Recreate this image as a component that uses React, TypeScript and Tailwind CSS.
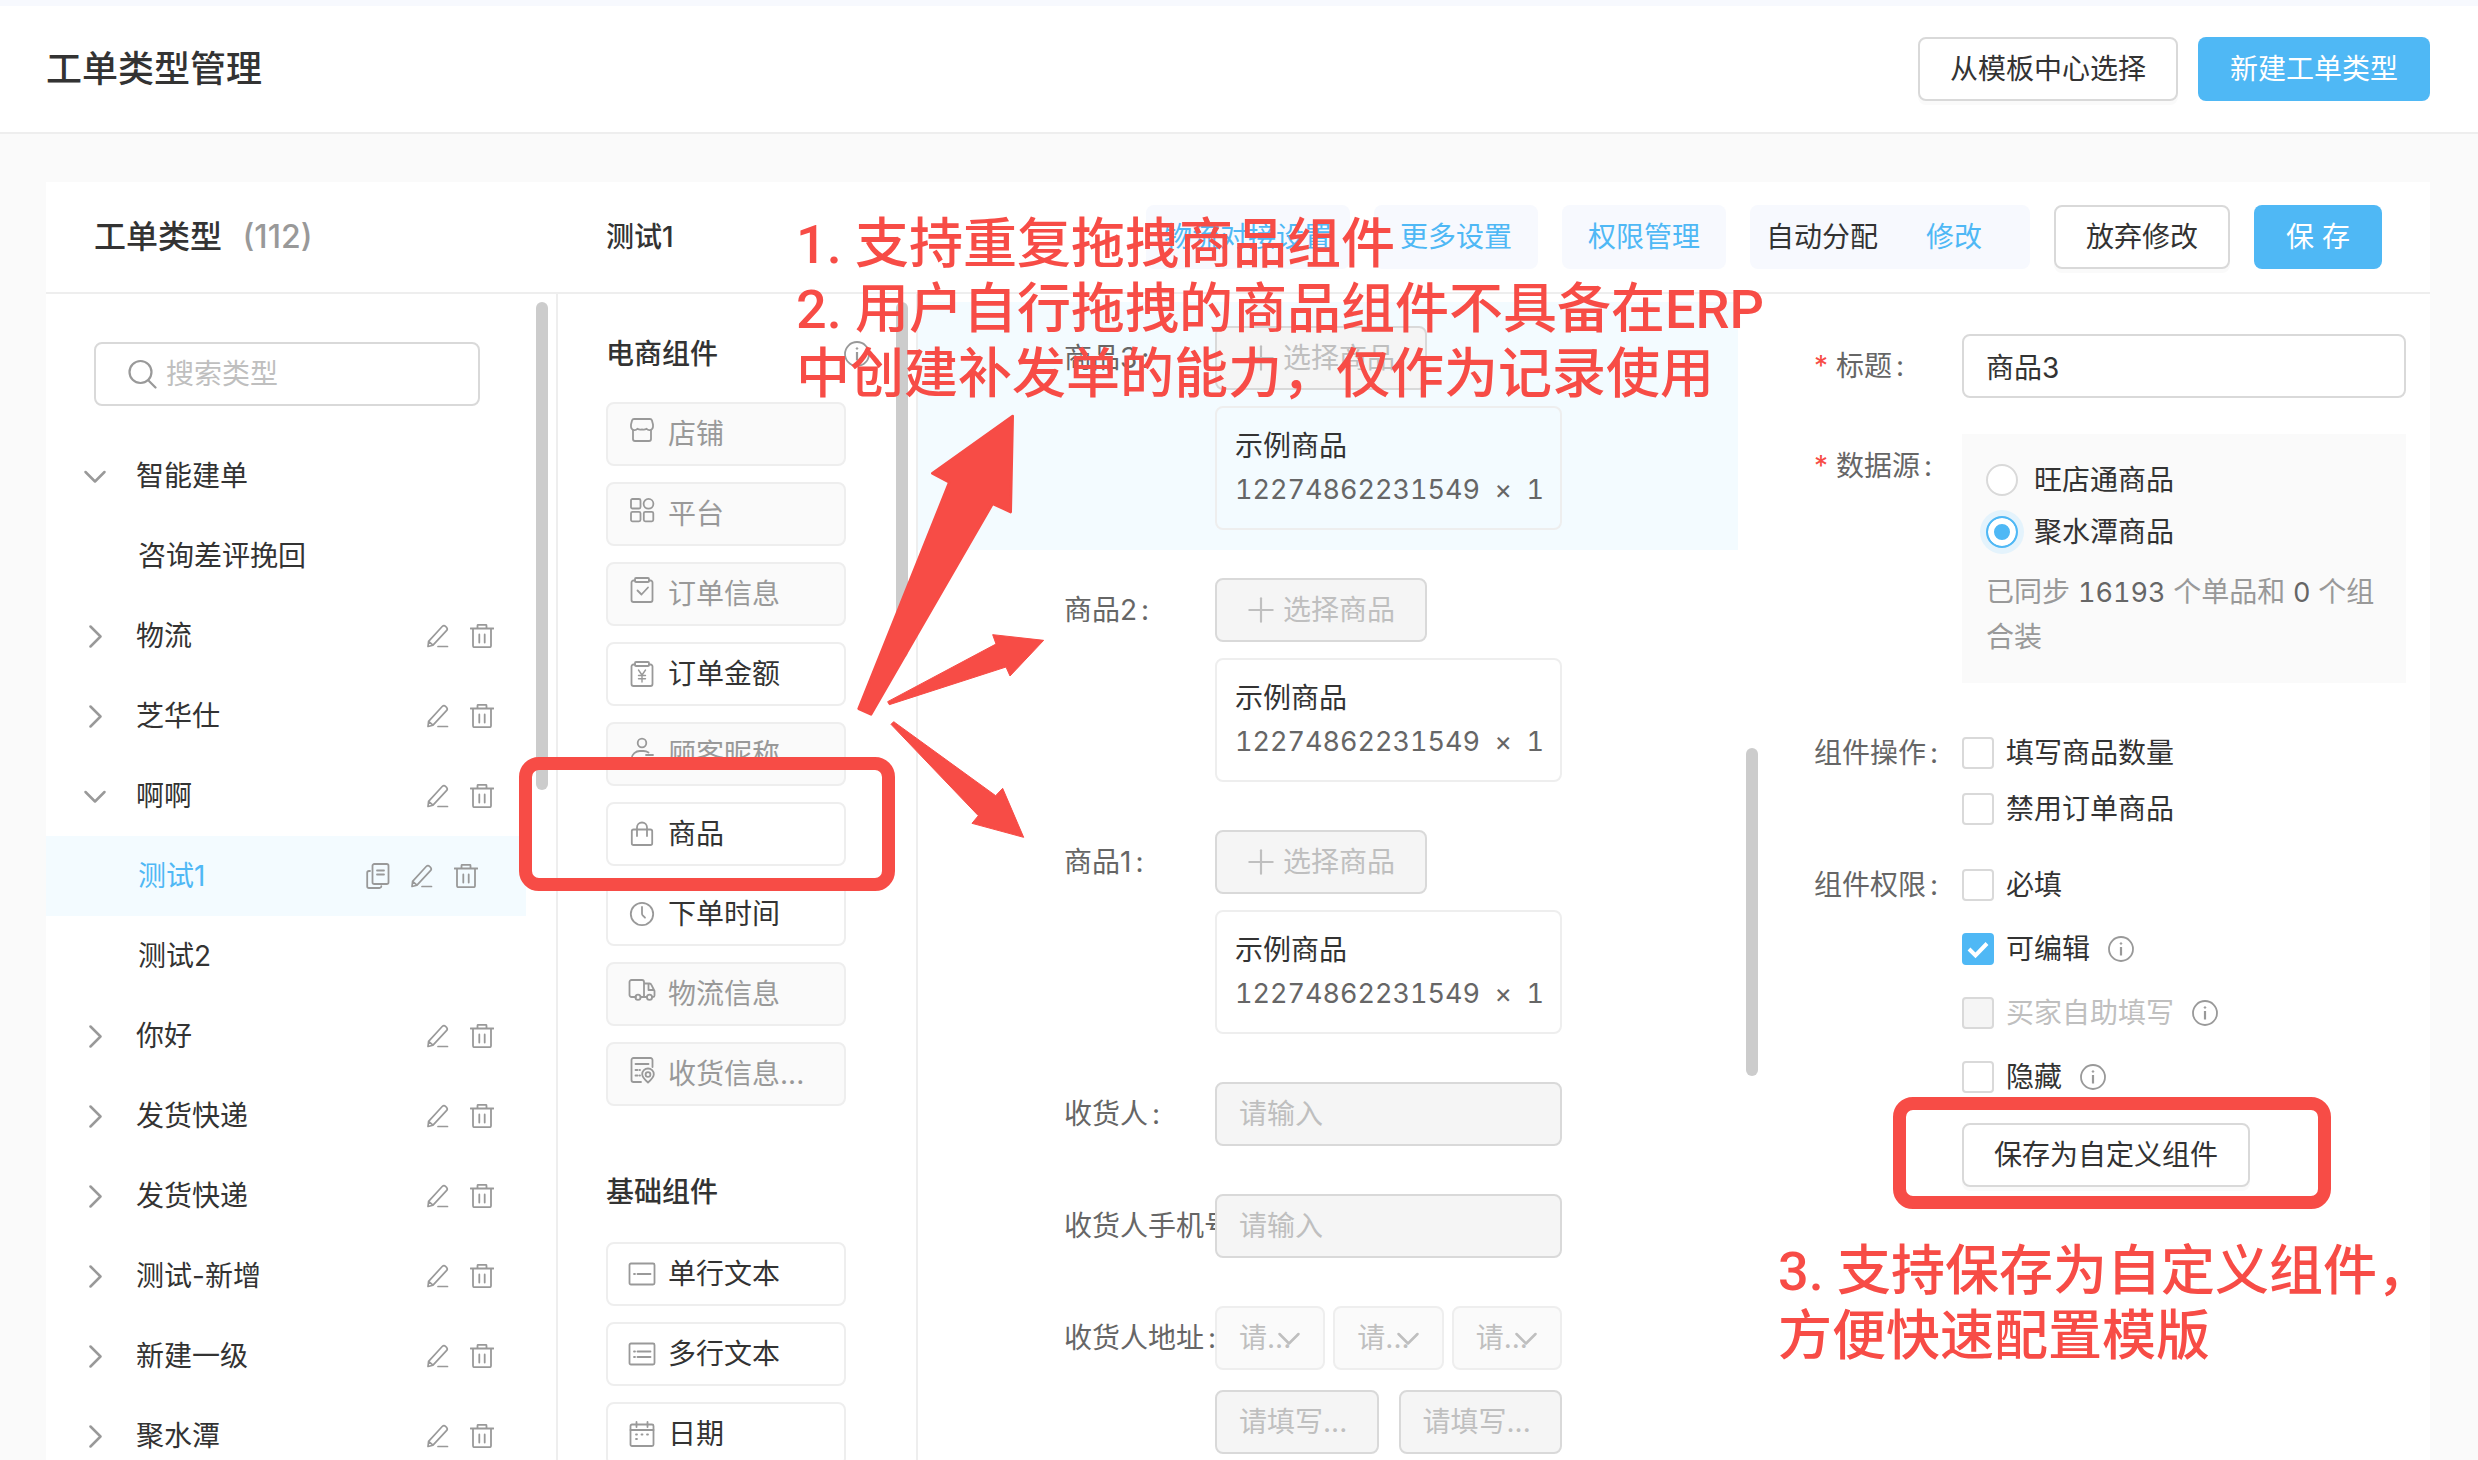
import { useState, type ReactNode } from 'react'
import { Plus } from 'lucide-react'

const icons: Record<string, ReactNode> = {
  shop: (
    <>
      <path d="M4 1h16c1 0 1.600.500 1.900 1.300L23 6.500v2.300a3.600 3.600 0 0 1-6.400 2 5.600 5.600 0 0 1-4.600.600 5.600 5.600 0 0 1-4.600-.600A3.600 3.600 0 0 1 1 8.800V6.500l1.100-4.200C2.400 1.500 3 1 4 1z" />
      <path d="M3 12v9c0 1.100.900 2 2 2h14c1.100 0 2-.900 2-2v-9" />
    </>
  ),
  platform: (
    <>
      <rect x="1" y="1" width="9.500" height="9.500" rx="1.500" />
      <circle cx="18.500" cy="5.800" r="4.900" />
      <rect x="1" y="13.800" width="9.500" height="9.500" rx="1.500" />
      <rect x="13.800" y="13.800" width="9.500" height="9.500" rx="1.500" />
    </>
  ),
  orderInfo: (
    <>
      <path d="M5 2.500H3.500A2 2 0 0 0 1.500 4.500V22a2 2 0 0 0 2 2h17a2 2 0 0 0 2-2V4.500a2 2 0 0 0-2-2H19" />
      <rect x="5" y="0" width="14" height="4" rx="1" />
      <path d="M7.500 12.500l4 4 6.500-7" />
    </>
  ),
  orderAmount: (
    <>
      <path d="M5 2.500H3.500A2 2 0 0 0 1.500 4.500V22a2 2 0 0 0 2 2h17a2 2 0 0 0 2-2V4.500a2 2 0 0 0-2-2H19" />
      <rect x="5" y="0" width="14" height="4" rx="1" />
      <path d="M8.500 8l3.500 5 3.500-5M12 13v7M8.500 13.500h7M8.500 16.800h7" strokeWidth="1.400" />
    </>
  ),
  customer: (
    <>
      <circle cx="12" cy="5" r="4.300" />
      <path d="M1.500 22v-1.500A8.500 8.500 0 0 1 10 13h3.500c2 0 3.700.600 5 1.500M16 17h7M1.500 22h21" />
    </>
  ),
  goods: (
    <>
      <rect x="1.800" y="7.500" width="20.400" height="15.500" rx="1.800" />
      <path d="M7 14V5.500a5 5 0 0 1 10 0V14" />
    </>
  ),
  time: (
    <>
      <circle cx="12" cy="12" r="11.200" />
      <path d="M12 5v6.500c0 .800.200 1.300.700 1.900l2.300 2.300" />
    </>
  ),
  logistics: (
    <>
      <path d="M6 19H1.500a2 2 0 0 1-2-2V4a2 2 0 0 1 2-2H12a2 2 0 0 1 2 2v15h-3.500M14 5.500h5.500c.800 0 1.500.400 1.800 1.100L24.500 13v4.500c0 .900-.600 1.500-1.500 1.500h-1M14 19h2.500M18.500 5.500V12h5.500" />
      <circle cx="8" cy="19.200" r="2.600" />
      <circle cx="19.500" cy="19.200" r="2.600" />
    </>
  ),
  receiver: (
    <>
      <path d="M22.500 9V2a2 2 0 0 0-2-2h-17a2 2 0 0 0-2 2v20a2 2 0 0 0 2 2H11M5.500 6h13M5.500 12h2M5.500 17.500h2M9.500 12h.500M9.500 17.500h.500" />
      <path d="M18 24.500c-3.500-3-5.800-5.200-5.800-8.200a5.800 5.800 0 0 1 11.600 0c0 3-2.300 5.200-5.800 8.200z" />
      <circle cx="18" cy="16.500" r="2.400" />
    </>
  ),
  singleLine: (
    <>
      <rect x="-.500" y="1.500" width="25" height="21" rx="1.500" />
      <path d="M4 12h1M7.500 12h13" />
    </>
  ),
  multiLine: (
    <>
      <rect x="-.500" y="1.500" width="25" height="21" rx="1.500" />
      <path d="M4 9.500h1M7.500 9.500h13M4 15h1M7.500 15h13" />
    </>
  ),
  date: (
    <>
      <rect x=".500" y="2.500" width="23" height="21.500" rx="1.500" />
      <path d="M.500 8h23M6.500 0v5M17.500 0v5M6 12.500h1M11.500 12.500h1M17 12.500h1M6 17h1" />
    </>
  ),
}

const treeNodes: { name: string; kind: 'open' | 'closed' | 'child'; locked?: boolean }[] = [
  { name: '智能建单', kind: 'open', locked: true },
  { name: '咨询差评挽回', kind: 'child' },
  { name: '物流', kind: 'closed' },
  { name: '芝华仕', kind: 'closed' },
  { name: '啊啊', kind: 'open' },
  { name: '测试1', kind: 'child' },
  { name: '测试2', kind: 'child' },
  { name: '你好', kind: 'closed' },
  { name: '发货快递', kind: 'closed' },
  { name: '发货快递', kind: 'closed' },
  { name: '测试-新增', kind: 'closed' },
  { name: '新建一级', kind: 'closed' },
  { name: '聚水潭', kind: 'closed' },
]

const shopWidgets = [
  { name: '店铺', icon: 'shop', disabled: true },
  { name: '平台', icon: 'platform', disabled: true },
  { name: '订单信息', icon: 'orderInfo', disabled: true },
  { name: '订单金额', icon: 'orderAmount' },
  { name: '顾客昵称', icon: 'customer', disabled: true },
  { name: '商品', icon: 'goods' },
  { name: '下单时间', icon: 'time' },
  { name: '物流信息', icon: 'logistics', disabled: true },
  { name: '收货信息...', icon: 'receiver', disabled: true },
]

const baseWidgets = [
  { name: '单行文本', icon: 'singleLine' },
  { name: '多行文本', icon: 'multiLine' },
  { name: '日期', icon: 'date' },
]

function Chevron({ dir }: { dir: 'down' | 'right' }) {
  return (
    <svg viewBox="0 0 24 24" fill="none" stroke="currentColor" strokeWidth="2.500" strokeLinecap="round" strokeLinejoin="round" className="size-6 shrink-0">
      <path d={dir === 'down' ? 'M2.500 8l9.500 9.500L21.500 8' : 'M7.500 2.500l10 10-10 10'} />
    </svg>
  )
}

function InfoIcon() {
  return (
    <svg viewBox="0 0 26 26" fill="none" stroke="#999" strokeWidth="1.800" className="size-[26px] shrink-0">
      <circle cx="13" cy="13" r="12" />
      <path d="M13 11v8.500" strokeWidth="2.200" />
      <circle cx="13" cy="7.500" r=".800" strokeWidth="1" fill="#999" />
    </svg>
  )
}

function PencilIcon() {
  return (
    <svg viewBox="0 0 24 24" fill="none" stroke="currentColor" strokeWidth="1.700" strokeLinejoin="round" strokeLinecap="round" className="size-6">
      <path d="M2 22.500l.600-5.200L16.200 2.500a2.500 2.500 0 0 1 3.500 0l.800.800a2.500 2.500 0 0 1 0 3.400L7 21.200 2 22.500zM2.600 17.300L7 21.200M12 22.500h9.500" />
    </svg>
  )
}

function TrashIcon() {
  return (
    <svg viewBox="0 0 24 24" fill="none" stroke="currentColor" strokeWidth="1.800" strokeLinejoin="round" strokeLinecap="round" className="size-6">
      <path d="M.500 4.500h23M7.500 4.500V1.700c0-.500.400-.900.900-.900h7.200c.500 0 .900.400.900.900v2.800M3 4.500v17.300c0 .800.700 1.400 1.400 1.400h15.200c.800 0 1.400-.600 1.400-1.400V4.500M9.300 10.500v8M14.700 10.500v8" />
    </svg>
  )
}

function CopyIcon() {
  return (
    <svg viewBox="0 0 24 26" fill="none" stroke="currentColor" strokeWidth="1.800" strokeLinejoin="round" strokeLinecap="round" className="h-[26px] w-6">
      <rect x="6.500" y="1" width="16" height="20" rx="1.800" />
      <path d="M4 8H3a1.800 1.800 0 0 0-1.800 1.800v13.400A1.800 1.800 0 0 0 3 25h10.500a1.800 1.800 0 0 0 1.800-1.800M11 7.500h7M11 11.500h7" />
    </svg>
  )
}

function TreeRow({ node, active, onSelect }: { node: (typeof treeNodes)[number]; active: boolean; onSelect: () => void }) {
  const isChild = node.kind === 'child'
  return (
    <li className={`mr-[30px] flex h-20 items-center text-[#999] ${active ? 'bg-[#f3fbff] pr-12' : 'pr-8'}`}>
      <div className={`flex pl-[37px] ${isChild ? 'w-[92px]' : 'w-[90px]'}`}>
        {!isChild && <Chevron dir={node.kind === 'open' ? 'down' : 'right'} />}
      </div>
      <button onClick={onSelect} className={`flex-1 text-left ${active ? 'text-[#4fb8f5]' : 'text-[#333]'}`}>
        {node.name}
      </button>
      <div className="flex items-center gap-5">
        {active && <button aria-label="复制"><CopyIcon /></button>}
        {(active || (!isChild && !node.locked)) && (
          <>
            <button aria-label="编辑"><PencilIcon /></button>
            <button aria-label="删除"><TrashIcon /></button>
          </>
        )}
      </div>
    </li>
  )
}

function WidgetButton({ name, icon, disabled }: { name: string; icon: string; disabled?: boolean }) {
  return (
    <button
      disabled={disabled}
      className={`flex h-16 w-full items-center gap-3 rounded-lg border-2 border-[#eee] px-5 ${disabled ? 'bg-[#fafafa] text-[#999]' : 'bg-white text-[#333]'}`}
    >
      <span className={disabled ? 'pb-2' : ''}>
        <svg viewBox="-2 -2 28 28" fill="none" stroke="#999" strokeWidth="1.800" strokeLinecap="round" strokeLinejoin="round" className="size-7">
          {icons[icon]}
        </svg>
      </span>
      {name}
    </button>
  )
}

function FormRow({ label, active, children }: { label: string; active?: boolean; children: ReactNode }) {
  return (
    <div className={`mb-1 flex pt-6 pb-5 pl-[146px] ${active ? 'bg-[#f3fbff]' : ''}`}>
      <div className="flex h-16 w-[151px] shrink-0 items-center overflow-hidden whitespace-nowrap text-[#666]">
        {label}
        <span className="ml-1">:</span>
      </div>
      <div className="w-[347px]">{children}</div>
    </div>
  )
}

function GoodsField() {
  return (
    <>
      <button disabled className="flex h-16 items-center gap-0.5 rounded-lg border-2 border-[#d9d9d9] bg-[#f5f5f5] pr-[30px] pl-6 text-[#bfbfbf]">
        <Plus size={40} strokeWidth={1.300} />
        选择商品
      </button>
      <div className="mt-4 h-[124px] rounded-lg border-2 border-[#eee] pt-4 pr-4 pl-[18px] leading-[44px]">
        <div className="text-[#333]">示例商品</div>
        <div className="flex justify-between text-[27px] text-[#666] tabular-nums">
          <span>12274862231549</span>
          <span>×</span>
          <span>1</span>
        </div>
      </div>
    </>
  )
}

const inputClass = 'h-16 w-full min-w-0 rounded-lg border-2 border-[#d9d9d9] px-[22px] placeholder:text-[#bfbfbf] disabled:bg-[#f5f5f5]'

function Check({ label, defaultChecked, disabled, info }: { label: string; defaultChecked?: boolean; disabled?: boolean; info?: boolean }) {
  return (
    <div className="flex h-8 items-center gap-[18px]">
      <label className={`flex items-center gap-3 ${disabled ? 'text-[#bfbfbf]' : 'text-[#333]'}`}>
        <span className="relative size-8">
          <input
            type="checkbox"
            defaultChecked={defaultChecked}
            disabled={disabled}
            className="peer block size-8 appearance-none rounded border-2 border-[#d9d9d9] bg-white checked:border-[#4fb8f5] checked:bg-[#4fb8f5] disabled:bg-[#f5f5f5]"
          />
          <svg viewBox="0 0 32 32" fill="none" stroke="white" strokeWidth="4" className="pointer-events-none absolute inset-0 hidden size-8 peer-checked:block">
            <path d="M7 16l6.500 6.500L25 10.500" />
          </svg>
        </span>
        {label}
      </label>
      {info && <InfoIcon />}
    </div>
  )
}

function Radio({ label, defaultChecked }: { label: string; defaultChecked?: boolean }) {
  return (
    <label className="flex h-8 items-center gap-4 text-[#333]">
      <input
        type="radio"
        name="source"
        defaultChecked={defaultChecked}
        className="size-8 appearance-none rounded-full border-2 border-[#d9d9d9] bg-white checked:border-[#4fb8f5] checked:bg-[#4fb8f5] checked:shadow-[inset_0_0_0_6px_white,0_0_0_6px_#e4f3fc]"
      />
      {label}
    </label>
  )
}

function Thumb({ className }: { className: string }) {
  return <div className={`absolute w-3 rounded-full bg-[#ccc] ${className}`} />
}

const plainButton = 'h-16 rounded-lg border-2 border-[#d9d9d9] bg-white px-[30px] text-[#333] shadow-[0_4px_0_#fafafa]'
const primaryButton = 'h-16 rounded-lg bg-[#4fb8f5] px-8 text-white'
const pill = 'flex h-16 items-center rounded-lg bg-[#f7f9fe] text-[#4fb8f5]'

export default function App() {
  const [selected, setSelected] = useState(5)

  return (
    <div className="relative flex h-screen flex-col overflow-hidden bg-[#fafafa] font-['Inter','Noto_Sans_CJK_SC',sans-serif] text-[28px] leading-10">
      <header className="flex h-[134px] shrink-0 items-center border-t-[6px] border-b-2 border-t-[#f7f9fe] border-b-[#eee] bg-white pr-12 pl-[46px]">
        <h1 className="flex-1 text-[36px] font-medium text-[#333]">工单类型管理</h1>
        <div className="flex gap-5">
          <button className={plainButton}>从模板中心选择</button>
          <button className={primaryButton}>新建工单类型</button>
        </div>
      </header>

      <main className="mt-12 mr-12 ml-[46px] flex min-h-0 flex-1 flex-col bg-white">
        <div className="flex h-28 shrink-0 items-center border-b-2 border-[#eee] pr-12">
          <h2 className="w-[560px] pl-12 text-[32px] font-medium text-[#333]">
            工单类型 <span className="ml-3 text-[#999]">(112)</span>
          </h2>
          <h3 className="flex-1 text-[28px] font-medium text-[#333]">测试1</h3>
          <div className="flex gap-6">
            <button className={`${pill} px-[18px]`}>物流对接设置</button>
            <button className={`${pill} px-[26px]`}>更多设置</button>
            <button className={`${pill} px-[26px]`}>权限管理</button>
            <div className={`${pill} w-[280px] pl-4`}>
              <span className="text-[#333]">自动分配</span>
              <button className="ml-12">修改</button>
            </div>
            <button className={plainButton}>放弃修改</button>
            <button className={primaryButton}>保 存</button>
          </div>
        </div>

        <div className="flex min-h-0 flex-1">
          <nav className="relative w-[512px] shrink-0 overflow-hidden border-r-2 border-[#eee]">
            <div className="mt-12 mr-[76px] mb-[30px] ml-12 flex h-16 items-center gap-2 rounded-lg border-2 border-[#d9d9d9] pl-8">
              <svg viewBox="0 0 30 30" fill="none" stroke="#999" strokeWidth="2.200" strokeLinecap="round" className="size-[30px]">
                <circle cx="12.500" cy="13" r="11" />
                <path d="M20.500 21.500l7 7" />
              </svg>
              <input aria-label="搜索类型" placeholder="搜索类型" className="w-0 flex-1 outline-none placeholder:text-[#bfbfbf]" />
            </div>
            <ul>
              {treeNodes.map((node, i) => (
                <TreeRow key={i} node={node} active={i === selected} onSelect={() => setSelected(i)} />
              ))}
            </ul>
            <Thumb className="top-2 right-2 h-[488px]" />
          </nav>

          <section className="relative w-[360px] shrink-0 overflow-hidden border-r-2 border-[#eee] pr-[70px] pl-12">
            <div className="mt-10 mb-7 flex items-center justify-between">
              <h4 className="font-medium text-[#333]">电商组件</h4>
              <span className="-mr-6"><InfoIcon /></span>
            </div>
            <div className="space-y-4">
              {shopWidgets.map((w) => <WidgetButton key={w.name} {...w} />)}
            </div>
            <h4 className="mt-[66px] mb-[30px] font-medium text-[#333]">基础组件</h4>
            <div className="space-y-4">
              {baseWidgets.map((w) => <WidgetButton key={w.name} {...w} />)}
            </div>
            <Thumb className="top-2 right-2 h-[356px]" />
          </section>

          <section className="relative min-w-0 flex-1 overflow-hidden pt-2 pr-7">
            <FormRow label="商品3" active><GoodsField /></FormRow>
            <FormRow label="商品2"><GoodsField /></FormRow>
            <FormRow label="商品1"><GoodsField /></FormRow>
            <FormRow label="收货人">
              <input aria-label="收货人" disabled placeholder="请输入" className={inputClass} />
            </FormRow>
            <FormRow label="收货人手机号">
              <input aria-label="收货人手机号" disabled placeholder="请输入" className={inputClass} />
            </FormRow>
            <FormRow label="收货人地址">
              <div className="flex gap-2">
                {['省', '市', '区'].map((area) => (
                  <div key={area} className="relative flex-1">
                    <select aria-label={area} disabled className="h-16 w-full appearance-none rounded-lg border-2 border-[#eee] bg-[#fafafa] pl-[22px] text-[#bfbfbf] opacity-100">
                      <option>请...</option>
                    </select>
                    <span className="pointer-events-none absolute top-5 right-6 text-[#bfbfbf]"><Chevron dir="down" /></span>
                  </div>
                ))}
              </div>
              <div className="mt-5 flex gap-5">
                <input aria-label="街道" disabled placeholder="请填写..." className={inputClass} />
                <input aria-label="详细地址" disabled placeholder="请填写..." className={inputClass} />
              </div>
            </FormRow>
            <Thumb className="top-[454px] right-2 h-[328px]" />
          </section>

          <form className="w-[664px] shrink-0 pt-10 pr-6 pl-12 text-[#666]">
            <div className="flex items-center">
              <label htmlFor="title" className="w-[148px]">
                <span className="mr-2 text-[#f74c46]">*</span>标题<span className="ml-1">:</span>
              </label>
              <input id="title" defaultValue="商品3" className={`${inputClass} flex-1 text-[#333]`} />
            </div>
            <div className="mt-9 flex">
              <div className="w-[148px] pt-3">
                <span className="mr-2 text-[#f74c46]">*</span>数据源<span className="ml-1">:</span>
              </div>
              <div className="flex-1 bg-[#fafafa] px-6 pt-[30px] pb-6">
                <Radio label="旺店通商品" />
                <div className="mt-5"><Radio label="聚水潭商品" defaultChecked /></div>
                <p className="mt-[22px] leading-[44px] text-[#999]">
                  已同步 <span className="text-[27px] text-[#666] tabular-nums">16193</span> 个单品和 <span className="text-[27px] text-[#666]">0</span> 个组合装
                </p>
              </div>
            </div>
            <div className="mt-[54px] flex">
              <div className="w-[148px] -mt-1">组件操作<span className="ml-1">:</span></div>
              <div className="space-y-6">
                <Check label="填写商品数量" />
                <Check label="禁用订单商品" />
              </div>
            </div>
            <div className="mt-11 flex">
              <div className="w-[148px] -mt-1">组件权限<span className="ml-1">:</span></div>
              <div>
                <div className="space-y-8">
                  <Check label="必填" />
                  <Check label="可编辑" defaultChecked info />
                  <Check label="买家自助填写" disabled info />
                  <Check label="隐藏" info />
                </div>
                <button type="button" className={`${plainButton} mt-[30px]`}>保存为自定义组件</button>
              </div>
            </div>
          </form>
        </div>
      </main>

      {/* annotation layer */}
      <div className="pointer-events-none absolute inset-0 font-['Roboto','Noto_Sans_CJK_SC',sans-serif] text-[54px] leading-[65px] font-medium text-[#f74c46]">
        <p className="absolute top-[212px] left-[796px] whitespace-nowrap">
          1. 支持重复拖拽商品组件<br />
          2. 用户自行拖拽的商品组件不具备在ERP<br />
          中创建补发单的能力，仅作为记录使用
        </p>
        <p className="absolute top-[1239px] left-[1778px] whitespace-nowrap">
          3. 支持保存为自定义组件，<br />
          方便快速配置模版
        </p>
        <div className="absolute top-[757px] left-[519px] h-[134px] w-[376px] rounded-[20px] border-[13px] border-[#f74c46]" />
        <div className="absolute top-[1097px] left-[1893px] h-28 w-[438px] rounded-[20px] border-[13px] border-[#f74c46]" />
        <svg viewBox="0 0 720 1350" fill="#f74c46" stroke="#f74c46" strokeLinejoin="round" className="absolute top-[400px] left-[840px] h-[450px] w-60">
          <path strokeWidth="8" d="M518 48L277 220l51 27L56 926l37 17L458 311l54 25z" />
          <path strokeWidth="3" d="M611 721L458 704l10 28-325 173 5 9 350-113 12 27z" />
          <path strokeWidth="3" d="M551 1312l-63-147-21 22-306-222-8 8 262 274-19 23z" />
        </svg>
      </div>
    </div>
  )
}
